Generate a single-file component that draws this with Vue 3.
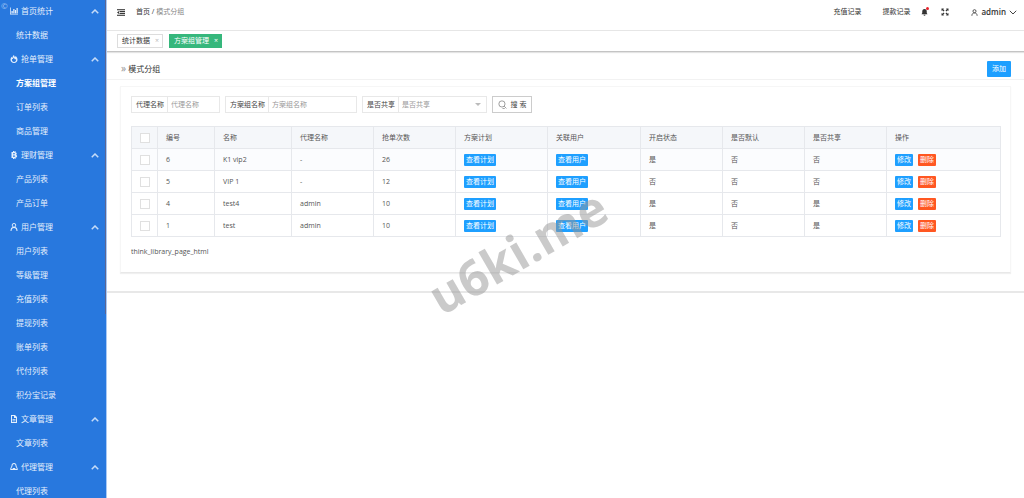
<template>
  <div class="layout">
    <aside class="sidebar">
      <span class="logo">©</span>
      <nav class="menu">
        <div v-for="group in menus" :key="group.title" class="menu-group">
          <button type="button" class="menu-head">
            <svg class="menu-icon" viewBox="0 0 16 16">
              <path :d="group.icon" fill-rule="evenodd" />
            </svg>
            <span>{{ group.title }}</span>
            <svg class="menu-arrow" viewBox="0 0 16 10">
              <path d="M1.5 8.5L8 2l6.5 6.5" />
            </svg>
          </button>
          <a
            v-for="item in group.items"
            :key="item"
            href="#"
            class="menu-item"
            :class="{ active: item === activeMenu }"
            >{{ item }}</a
          >
        </div>
      </nav>
      <div class="scroll-thumb"></div>
    </aside>

    <div class="body">
      <header class="header">
        <button type="button" class="icon-btn" aria-label="菜单">
          <svg class="fold-icon" viewBox="0 0 16 14">
            <path d="M0 1.5h16M5 5.2h11M5 8.8h11M0 12.5h16" />
            <path class="solid" d="M4 4L0 7l4 3z" />
          </svg>
        </button>
        <div class="breadcrumb">
          <a href="#">首页</a> / <span>模式分组</span>
        </div>
        <div class="header-right">
          <a href="#" class="record">充值记录</a>
          <a href="#" class="record">提款记录</a>
          <button type="button" class="icon-btn bell" aria-label="通知">
            <svg viewBox="0 0 16 16">
              <path d="M7 2c-3 0-4.5 2-4.5 5v3L1 12.5h12L11.500 10V7C11.500 4 10 2 7 2zM5 13.500h4a2 2 0 0 1-4 0z" />
            </svg>
            <i class="dot"></i>
          </button>
          <button type="button" class="icon-btn full" aria-label="全屏">
            <svg viewBox="0 0 16 16">
              <path d="M1 1h5L4.500 2.500l2.500 2.500-2 2L2.500 4.500 1 6zM15 1v5l-1.500-1.500L11 7 9 5l2.500-2.500L10 1zM1 15v-5l1.500 1.500L5 9l2 2-2.500 2.500L6 15zM15 15h-5l1.500-1.500L9 11l2-2 2.500 2.500L15 10z" />
            </svg>
          </button>
          <button type="button" class="account">
            <svg class="user-icon" viewBox="0 0 16 16">
              <circle cx="8" cy="5" r="3.500" />
              <path d="M2 15.500c0-4 2-6.500 6-6.500s6 2.500 6 6.500" />
            </svg>
            <span>admin</span>
            <svg class="down-icon" viewBox="0 0 16 10">
              <path d="M1.500 1.500L8 8l6.500-6.500" />
            </svg>
          </button>
        </div>
      </header>

      <div class="tabs">
        <button type="button" class="tab">统计数据 <span class="close">×</span></button>
        <button type="button" class="tab active">方案组管理 <span class="close">×</span></button>
      </div>

      <main class="page">
        <div class="page-title">
          <h1><span class="quote">»</span> 模式分组</h1>
          <button type="button" class="btn-add">添加</button>
        </div>

        <div class="card">
          <form class="search" @submit.prevent>
            <div class="field">
              <label for="agent">代理名称</label>
              <input id="agent" class="agent" type="text" placeholder="代理名称" />
            </div>
            <div class="field">
              <label for="plan">方案组名称</label>
              <input id="plan" class="plan" type="text" placeholder="方案组名称" />
            </div>
            <div class="field">
              <label for="share">是否共享</label>
              <div class="select-wrap">
                <select id="share" v-model="share">
                  <option value="">是否共享</option>
                  <option value="1">是</option>
                  <option value="0">否</option>
                </select>
                <i class="caret"></i>
              </div>
            </div>
            <button type="submit" class="btn-search">
              <svg viewBox="0 0 16 16">
                <circle cx="7" cy="7" r="5.500" />
                <path d="M11 11l4 4M8 15h4" />
              </svg>
              <span>搜 索</span>
            </button>
          </form>

          <table class="table">
            <colgroup>
              <col v-for="(w, i) in widths" :key="i" :style="{ width: w + 'px' }" />
            </colgroup>
            <thead>
              <tr>
                <th class="check"><input type="checkbox" aria-label="全选" /></th>
                <th v-for="c in columns" :key="c">{{ c }}</th>
              </tr>
            </thead>
            <tbody>
              <tr v-for="(row, i) in rows" :key="row.id" :class="{ hover: i === 0 }">
                <td class="check"><input type="checkbox" :aria-label="row.name" /></td>
                <td>{{ row.id }}</td>
                <td>{{ row.name }}</td>
                <td>{{ row.agent }}</td>
                <td>{{ row.count }}</td>
                <td><button type="button" class="btn">查看计划</button></td>
                <td><button type="button" class="btn">查看用户</button></td>
                <td>{{ row.open }}</td>
                <td>{{ row.isDefault }}</td>
                <td>{{ row.share }}</td>
                <td>
                  <div class="actions">
                    <button type="button" class="btn">修改</button>
                    <button type="button" class="btn danger">删除</button>
                  </div>
                </td>
              </tr>
            </tbody>
          </table>
          <p class="pager">think_library_page_html</p>
        </div>
      </main>
    </div>

    <div class="watermark">u6ki.me</div>
  </div>
</template>

<script setup>
import { ref } from 'vue';

const activeMenu = ref('方案组管理');
const share = ref('');

const icons = {
  chart: 'M0 1h1.500v12.500H16V15H0zM3 8h2.500v4.500H3zM6.500 4H9v8.500H6.500zM10 6h2v6.500h-2zM13 2h2.500v10.500H13z',
  fire: 'M8 0c1 2 0 3 2 4 1-1 1-2 1-2 3 2 4 5 4 7.500C15 13 12 16 8 16s-7-3-7-6.500C1 7 2 5 4 3.500c0 1 0 2 1 2.500C5 3 6 1 8 0zM4 8c-1 3 1 6 4 6s5-3 4-6c-1 1-2 1-3 0L8 5C6 7 6 9 4 8z',
  coin: 'M3 2h3V0h2v2h1V0h2v2.500c3 .5 3.500 4 1 5 3.500 1 3 5.500-1 6V16H9v-2H8v2H6v-2H3zM6 4.500v2h3c1.500 0 1.500-2 0-2zM6 9v2.500h3c2 0 2-2.500 0-2.500z',
  user: 'M8 0a4.500 4.500 0 0 1 2.500 8.200C13.500 9 15 12 15 16h-2c0-4-2-6-5-6s-5 2-5 6H1c0-4 1.500-7 4.500-7.800A4.500 4.500 0 0 1 8 0zM8 2a2.700 2.700 0 1 0 0 5.400A2.700 2.700 0 0 0 8 2z',
  doc: 'M2 0h8l4 4v12H2zM4 2v12h8V6H8V2zM5 8h6v1.500H5zM5 11h6v1.500H5z',
  agent: 'M8 0c3 0 5 2 5 5.500 0 2 3 4 2.500 8.500H.5C0 9.500 3 7.500 3 5.500 3 2 5 0 8 0zM8 2C6 2 5 3.500 5 5.500 5 8 2.500 9 2.500 12H5l1-2h4l1 2h2.500c0-3-2.500-4-2.500-6.500C11 3.500 10 2 8 2z',
};

const menus = ref([
  { title: '首页统计', icon: icons.chart, items: ['统计数据'] },
  { title: '抢单管理', icon: icons.fire, items: ['方案组管理', '订单列表', '商品管理'] },
  { title: '理财管理', icon: icons.coin, items: ['产品列表', '产品订单'] },
  {
    title: '用户管理',
    icon: icons.user,
    items: ['用户列表', '等级管理', '充值列表', '提现列表', '账单列表', '代付列表', '积分宝记录'],
  },
  { title: '文章管理', icon: icons.doc, items: ['文章列表'] },
  { title: '代理管理', icon: icons.agent, items: ['代理列表'] },
]);

const columns = ['编号', '名称', '代理名称', '抢单次数', '方案计划', '关联用户', '开启状态', '是否默认', '是否共享', '操作'];
const widths = [26, 57, 77, 82, 82, 92, 93, 82, 82, 82, 114];

const rows = ref([
  { id: 6, name: 'K1 vip2', agent: '-', count: 26, open: '是', isDefault: '否', share: '否' },
  { id: 5, name: 'VIP 1', agent: '-', count: 12, open: '否', isDefault: '否', share: '否' },
  { id: 4, name: 'test4', agent: 'admin', count: 10, open: '是', isDefault: '否', share: '是' },
  { id: 1, name: 'test', agent: 'admin', count: 10, open: '是', isDefault: '否', share: '是' },
]);
</script>

<style>
body {
  overflow: hidden;
  background: #fff;
}
</style>

<style scoped>
.layout {
  position: relative;
  display: flex;
  height: 100vh;
  overflow: hidden;
  font-family: 'Open Sans', 'Noto Sans CJK SC', sans-serif;
  font-size: 7px;
  line-height: 12px;
  color: #555;
}

.layout * {
  box-sizing: border-box;
}

button,
input,
select {
  font: inherit;
  color: inherit;
  margin: 0;
  padding: 0;
  border: 0;
  background: none;
  border-radius: 0;
}

button {
  cursor: pointer;
}

a {
  color: inherit;
  text-decoration: none;
}

/* 侧边栏 */
.sidebar {
  position: relative;
  flex: 0 0 107px;
  overflow: hidden;
  background: #2878de;
  border-right: 1px solid #a9c9f5;
  color: #e4effc;
  font-size: 8px;
}

.logo {
  position: absolute;
  top: 0;
  left: 1px;
  font-size: 8px;
  color: #a9c9f5;
}

.scroll-thumb {
  position: absolute;
  top: 0;
  right: 0;
  width: 1px;
  height: 63%;
  background: #5a6694;
}

.menu {
  margin-top: -1px;
}

.menu-head {
  display: flex;
  align-items: center;
  gap: 3px;
  width: 100%;
  height: 24px;
  padding: 0 7px 0 10px;
}

.menu-icon {
  width: 8px;
  height: 8px;
  fill: #e4effc;
}

.menu-arrow {
  width: 8px;
  height: 5px;
  margin-left: auto;
  fill: none;
  stroke: #c6dcf8;
  stroke-width: 3;
}

.menu-item {
  display: block;
  height: 24px;
  padding-left: 16px;
  line-height: 24px;
}

.menu-item.active {
  color: #fff;
  font-weight: 700;
}

/* 顶部 */
.body {
  flex: 1;
  min-width: 0;
}

.header {
  display: flex;
  align-items: center;
  height: 31px;
  padding: 0 7px 6px 10px;
  border-bottom: 1px solid #e6e6e6;
  color: #333;
}

.icon-btn {
  display: flex;
  position: relative;
}

.icon-btn svg {
  width: 8px;
  height: 8px;
  fill: #333;
}

.icon-btn .fold-icon {
  height: 7px;
  stroke: #222;
  stroke-width: 2;
}

.fold-icon .solid {
  stroke: none;
}

.breadcrumb {
  margin-left: 11px;
}

.breadcrumb span {
  color: #888;
}

.header-right {
  display: flex;
  align-items: center;
  margin-left: auto;
}

.record {
  margin-right: 21px;
}

.bell {
  margin-left: -10px;
}

.dot {
  position: absolute;
  top: -1px;
  right: 0;
  width: 3px;
  height: 3px;
  border-radius: 50%;
  background: #e8202a;
}

.full {
  margin-left: 12px;
}

.account {
  display: flex;
  align-items: center;
  gap: 3px;
  margin-left: 22px;
  font-size: 8px;
  font-weight: 600;
}

.account svg {
  fill: none;
  stroke: #444;
  stroke-width: 2;
}

.user-icon {
  width: 7px;
  height: 7px;
}

.down-icon {
  width: 8px;
  height: 5px;
}

/* 标签页 */
.tabs {
  display: flex;
  align-items: center;
  gap: 6px;
  height: 21px;
  padding: 0 10px;
  border-bottom: 1px solid #c4c4c4;
  box-shadow: 0 1px 1px #e4e4e4;
}

.tab {
  display: flex;
  align-items: center;
  gap: 5px;
  height: 14px;
  padding: 0 3px 0 4px;
  border: 1px solid #ddd;
  color: #333;
}

.tab .close {
  color: #bbb;
}

.tab.active {
  border-color: #36b77c;
  background: #36b77c;
  color: #fff;
}

.tab.active .close {
  color: #fff;
}

/* 内容 */
.page {
  padding-bottom: 18px;
  border-bottom: 2px solid #e8e8e8;
}

.page-title {
  display: flex;
  align-items: center;
  justify-content: space-between;
  height: 28px;
  margin-bottom: 6px;
  padding: 6px 13px 0 14px;
  border-bottom: 1px solid #f2f2f2;
}

.page-title h1 {
  margin: 0;
  font-size: 8px;
  font-weight: 400;
  color: #333;
}

.quote {
  font-family: 'Noto Sans', sans-serif;
  font-size: 10px;
  color: #999;
}

.btn-add {
  width: 24px;
  height: 16px;
  border-radius: 1px;
  background: #1e9fff;
  color: #fff;
}

.card {
  margin: 0 13px;
  padding: 9px 10px 14px;
  border: 1px solid #f6f6f6;
  border-bottom-color: #e8e8e8;
  box-shadow: 0 1px 1px #f0f0f0;
}

.search {
  display: flex;
  gap: 5px;
  margin-bottom: 13px;
}

.field {
  display: flex;
  height: 17px;
  border: 1px solid #e8e8e8;
}

.field label {
  padding: 0 3px 0 4px;
  line-height: 15px;
  border-right: 1px solid #e8e8e8;
  color: #444;
}

.field input {
  height: 15px;
  padding: 0 3px;
}

.field input::placeholder {
  color: #999;
  opacity: 1;
}

.agent {
  width: 51px;
}

.plan {
  width: 87px;
}

.select-wrap {
  position: relative;
}

.select-wrap select {
  width: 87px;
  height: 15px;
  padding: 0 3px;
  appearance: none;
  color: #999;
}

.caret {
  position: absolute;
  top: 6px;
  right: 5px;
  border: 3px solid transparent;
  border-top-color: #bbb;
  border-bottom: 0;
}

.btn-search {
  display: flex;
  align-items: center;
  justify-content: center;
  gap: 4px;
  width: 40px;
  height: 17px;
  border: 1px solid #ccc;
  color: #444;
}

.btn-search svg {
  width: 9px;
  height: 9px;
  fill: none;
  stroke: #555;
  stroke-width: 1;
}

.table {
  width: 100%;
  table-layout: fixed;
  border-collapse: collapse;
}

.table th,
.table td {
  height: 22px;
  padding: 0 8px;
  border: 1px solid #e6e8ec;
  text-align: left;
  font-weight: 400;
}

.table thead tr {
  background: #f5f7fa;
}

.table .hover {
  background: #fbfcfe;
}

.table input {
  display: block;
  width: 10px;
  height: 10px;
  appearance: none;
  border: 1px solid #e0e0e0;
  background: #fff;
}

.btn {
  display: block;
  height: 12px;
  padding: 0 2px;
  line-height: 12px;
  border-radius: 1px;
  background: #1e9fff;
  color: #fff;
}

.btn.danger {
  background: #ff5722;
}

.actions {
  display: flex;
  gap: 5px;
}

.pager {
  margin: 9px 0 0;
}

/* 水印 */
.watermark {
  position: absolute;
  top: 51%;
  left: 50%;
  padding-left: 12px;
  transform: translate(-50%, -50%) rotate(-30deg);
  font-size: 49px;
  line-height: 52px;
  font-weight: 700;
  color: rgba(150, 150, 150, 0.5);
  pointer-events: none;
}
</style>
